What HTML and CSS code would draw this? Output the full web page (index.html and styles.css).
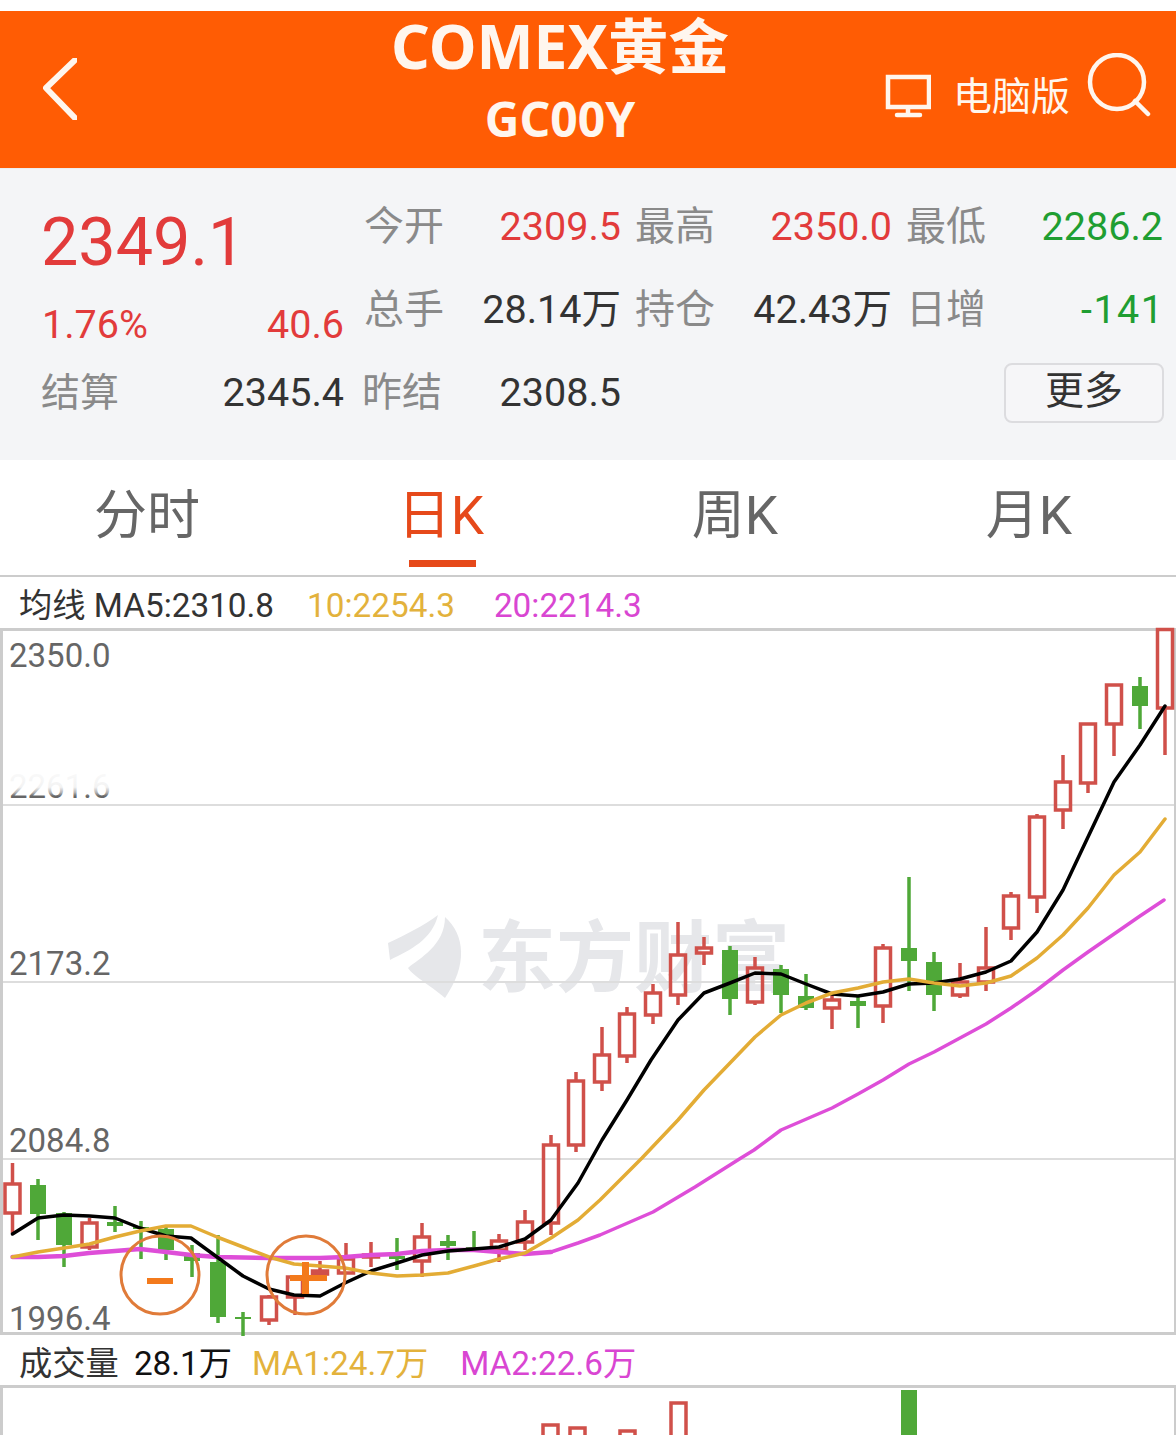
FILE: index.html
```html
<!DOCTYPE html>
<html lang="zh-CN">
<head>
<meta charset="utf-8">
<title>COMEX黄金</title>
<link rel="stylesheet" href="styles.css">
</head>
<body>
<div class="page">
  <header class="topbar">
    <div class="back">
      <svg class="ico-back" width="34" height="62" viewBox="0 0 34 62"><path d="M32 2 3 30 32 60"/></svg>
    </div>
    <div class="titles">
      <div class="title">COMEX黄金</div>
      <div class="code">GC00Y</div>
    </div>
    <div class="actions">
      <svg class="ico-line" width="46" height="44" viewBox="0 0 46 44"><path d="M3 3h41v30H3zM23 33v8M12 41h23"/></svg>
      <span class="pc">电脑版</span>
      <svg class="ico-line" width="64" height="64" viewBox="0 0 64 64"><circle cx="30" cy="29" r="27"/><path d="M48 48 61 61"/></svg>
    </div>
  </header>

  <section class="quote">
    <div class="main">
      <div class="price">2349.1</div>
      <div class="row up"><span>1.76%</span><span>40.6</span></div>
      <div class="row"><span class="lbl">结算</span><span>2345.4</span></div>
    </div>
    <div class="cells">
      <div class="cell"><span class="lbl">今开</span><span class="up">2309.5</span></div>
      <div class="cell"><span class="lbl">最高</span><span class="up">2350.0</span></div>
      <div class="cell"><span class="lbl">最低</span><span class="down">2286.2</span></div>
      <div class="cell"><span class="lbl">总手</span><span>28.14万</span></div>
      <div class="cell"><span class="lbl">持仓</span><span>42.43万</span></div>
      <div class="cell"><span class="lbl">日增</span><span class="down wide">-141</span></div>
      <div class="cell"><span class="lbl">昨结</span><span>2308.5</span></div>
      <div class="cell more-cell"><button class="more">更多</button></div>
    </div>
  </section>

  <nav class="tabs">
    <div class="tab">分时</div>
    <div class="tab active">日K</div>
    <div class="tab">周K</div>
    <div class="tab">月K</div>
  </nav>

  <div class="legend legend-ma">
    <span class="ink">均线 MA5:2310.8</span>
    <span class="gold">10:2254.3</span>
    <span class="pink">20:2214.3</span>
  </div>

  <div class="plot">
    <svg class="kline" width="1176" height="707" viewBox="0 628 1176 707">
      <defs>
        <linearGradient id="fade" x1="0" y1="0" x2="0" y2="1">
          <stop offset="0" stop-color="#fff"/>
          <stop offset="0.7" stop-color="#fff" stop-opacity="0.92"/>
          <stop offset="0.85" stop-color="#fff" stop-opacity="0.5"/>
          <stop offset="0.95" stop-color="#fff" stop-opacity="0"/>
        </linearGradient>
      </defs>
      <path class="wm" d="M445 917C465 935 468 965 445 998 430 985 412 975 408 968 420 958 445 945 445 917ZM438 915C425 925 405 935 388 943L390 960C410 950 432 940 438 915Z"/>
      <text class="wm" x="478" y="986">东方财富</text>
      <path class="grid" d="M3 805H1174M3 982H1174M3 1159H1174"/>
      <text class="axis" x="9" y="667">2350.0</text>
      <text class="axis" x="9" y="798">2261.6</text>
      <rect x="3" y="762" width="110" height="36" fill="url(#fade)"/>
      <text class="axis" x="9" y="975">2173.2</text>
      <text class="axis" x="9" y="1152">2084.8</text>
      <text class="axis" x="9" y="1330">1996.4</text>

      <path class="c-red" d="M12.5 1163V1184M12.5 1213V1233M5 1184h15v29H5zM89.5 1218V1223M89.5 1247V1250M82 1223h15v24H82zM269 1295V1297M269 1320V1325M261.500 1297h15v23h-15zM295 1297V1315M287.500 1277h15v20h-15zM320 1261V1271M312.500 1271h15v3h-15zM346 1243V1259M338.500 1259h15v14h-15zM371 1242V1255M371 1257V1267M363.500 1255h15v2h-15zM422 1223V1237M422 1261V1277M414.500 1237h15v24h-15zM499 1234V1241M499 1250V1262M491.500 1241h15v9h-15zM525 1210V1222M525 1242V1250M517.500 1222h15v20h-15zM551 1135V1145M551 1223V1235M543.500 1145h15v78h-15zM576 1072V1081M576 1145V1152M568.500 1081h15v64h-15zM602 1027V1055M602 1082V1091M594.500 1055h15v27h-15zM627 1007V1014M627 1056V1063M619.500 1014h15v42h-15zM653 984V993M653 1015V1024M645.500 993h15v22h-15zM678 922V955M678 995V1005M670.500 955h15v40h-15zM704 937V948M704 954V965M696.500 948h15v5h-15zM755 957V968M755 1002V1005M747.500 968h15v34h-15zM832 995V1000M832 1008V1029M824.500 1000h15v8h-15zM883 944V948M883 1006V1023M875.500 948h15v58h-15zM960 963V982M960 995V998M952.500 982h15v13h-15zM986 927V968M986 982V991M978.500 968h15v14h-15zM1011 892V896M1011 928V940M1003.500 896h15v32h-15zM1037 814V817M1037 897V913M1029.500 817h15v80h-15zM1063 755V782M1063 810V829M1055.500 782h15v28h-15zM1088 783V793M1080.500 724h15v59h-15zM1114 724V756M1106.500 685h15v39h-15zM1165 708V755M1157.500 629.500h15v78.500h-15z"/>
      <path class="c-wick" d="M38 1179V1240M64 1212V1267M115 1206V1232M141 1221V1259M166 1226V1260M192 1245V1277M218 1235V1323M243 1312V1336M397 1238V1270M448 1235V1260M474 1231V1250M730 946V1015M781 965V1013M806 974V1010M858 997V1028M909 877V991M934 952V1011M1140 677V729"/>
      <path class="c-body" d="M30 1185h16v29H30zM56 1213h16v32H56zM107 1222h16v4h-16zM133 1227h16v2h-16zM158 1229h16v21h-16zM184 1253h16v8h-16zM210 1262h16v55h-16zM235 1317h16v2h-16zM389 1256h16v3h-16zM440 1241h16v5h-16zM466 1247h16v2h-16zM722 950h16v49h-16zM773 969h16v26h-16zM798 996h16v12h-16zM850 1001h16v5h-16zM901 948h16v13h-16zM926 962h16v33h-16zM1132 686h16v20h-16z"/>

      <polyline class="ln ln-pink ln-heavy" points="12.500,1257 38,1257 64,1256 89,1253 115,1251 140,1249 166,1252 191,1255 217,1257 269,1258 320,1258 345,1257 371,1255 397,1254 422,1251 448,1250 474,1250 499,1252 525,1254 551,1252"/>
      <polyline class="ln ln-pink" points="551,1252 578,1243 600,1235 653,1212 695,1187 741,1158 754,1150 781,1130 832,1108 858,1094 883,1080 909,1064 934,1052 960,1038 986,1024 1011,1008 1037,990 1063,970 1088,952 1114,934 1140,916 1164,900"/>
      <polyline class="ln ln-black" points="12.500,1234 38,1218 64,1215 89.500,1216 115,1218 140,1228 166,1236 191,1238 217,1257 243,1276 269,1289 294,1295 320,1296 345,1283 371,1271 397,1263 422,1255 448,1251 474,1249 499,1247 525,1239 551,1220 578,1183 602,1140 627,1100 651,1060 678,1020 704,993 730,983 755,973 781,974 806,984 832,994 858,996 883,992 909,984 934,983 960,979 986,972 1011,961 1037,932 1063,890 1088,837 1114,782 1140,745 1165,706"/>
      <polyline class="ln ln-gold" points="12.500,1257 38,1252 64,1248 89.500,1244 115,1237 140,1231 166,1226 191,1226 217,1237 243,1247 269,1257 294,1264 320,1266 345,1268 371,1273 397,1276 422,1275 448,1273 474,1266 499,1259 525,1253 551,1238 578,1220 600,1200 642,1158 678,1120 704,1090 730,1063 755,1037 781,1015 806,1003 832,993 858,988 883,982 909,979 934,983 960,986 986,983 1011,976 1037,958 1063,935 1088,908 1114,875 1140,852 1165,819"/>

      <circle class="ring" cx="160" cy="1275" r="39"/>
      <circle class="ring" cx="306" cy="1275" r="39"/>
      <path class="sign" d="M147 1278h26v6h-26zM302 1262h7v13h18v6h-18v13h-7v-13h-12v-6h12z"/>
    </svg>
  </div>

  <div class="legend legend-vol">
    <span class="ink">成交量</span>
    <span class="black">28.1万</span>
    <span class="gold">MA1:24.7万</span>
    <span class="pink">MA2:22.6万</span>
  </div>

  <div class="vol">
    <svg class="volsvg" width="1176" height="50" viewBox="0 1385 1176 50">
      <path class="c-red" d="M543 1440v-15h15v15M570 1440v-12h15v12M620 1440v-9h15v9M671 1440v-37h15v37"/>
      <rect class="v-green" x="901" y="1390" width="16" height="45"/>
    </svg>
  </div>
</div>
</body>
</html>
```

FILE: styles.css
```css
* { box-sizing: border-box; }
html, body { margin: 0; padding: 0; background: #fff; }
body { font-family: Roboto, "Noto Sans CJK SC", sans-serif; color: #333; }
.page { width: 1176px; height: 1435px; overflow: hidden; padding-top: 11px; }

.topbar {
  height: 157px;
  background: #ff5c04;
  color: #fff6ee;
  display: grid;
  grid-template-columns: 233px 1fr 289px;
  align-items: center;
}
.back { padding-left: 43px; display: flex; align-items: center; }
.ico-back { fill: none; stroke: #fff6ee; stroke-width: 6; stroke-linecap: round; stroke-linejoin: round; margin-top: -2px; }
.titles { text-align: center; font-family: "Noto Sans", "Noto Sans CJK SC", sans-serif; font-weight: 700; padding-bottom: 8px; }
.title { font-size: 60.500px; line-height: 72px; margin-top: -10px; }
.code { font-size: 48px; line-height: 64px; margin-top: 5px; }
.actions { display: flex; align-items: center; margin-top: -1px; margin-left: -2px; }
.ico-line { fill: none; stroke: #fff6ee; stroke-width: 4.500; stroke-linecap: round; }
.pc { font-size: 39px; line-height: 50px; margin: 16px 17px 0 22px; }
.actions .ico-line:last-child { margin-top: -8px; }
.actions .ico-line:first-child { margin-top: 14px; }

.quote {
  height: 292px;
  background: #f4f5f7;
  border-top: 1px solid #eee;
  display: flex;
  padding: 0 12px 0 42px;
  font-size: 39.500px;
}
.main { width: 302px; flex: none; }
.price { font-size: 66.500px; line-height: 76px; margin: 35px 0 0 -1px; color: #e23b3b; }
.main .row { display: flex; justify-content: space-between; height: 50px; line-height: 50px; margin-top: 20px; }
.main .row + .row { margin-top: 18px; }
.up { color: #e23b3b; }
.down { color: #1f9e32; }
.wide { letter-spacing: 1.500px; margin-right: -1.500px; }
.lbl { color: #8a8a8a; font-size: 40px; }
.main .lbl { font-size: 39px; margin-left: -1px; }
.cells {
  flex: 1;
  margin-left: 20px;
  padding-top: 33px;
  display: grid;
  grid-template-columns: repeat(3, 257px);
  grid-auto-rows: 83px;
  column-gap: 14px;
  align-content: start;
}
.cell { display: flex; justify-content: space-between; height: 50px; line-height: 50px; }
.cell:nth-child(7) { grid-column: 1; margin-left: -2px; }
.more-cell { grid-column: 3; justify-content: flex-end; height: 60px; margin-top: -5px; }
.more {
  width: 160px;
  height: 60px;
  border: 2px solid #dcdcdf;
  border-radius: 8px;
  background: #f6f6f8;
  font: 39px/44px Roboto, "Noto Sans CJK SC", sans-serif;
  color: #333;
  padding: 0 0 4px;
  margin-right: -1px;
}

.tabs { display: flex; height: 117px; background: #fff; border-bottom: 2px solid #ccc; }
.tab { flex: 1; text-align: center; font-size: 53px; line-height: 112px; color: #666; position: relative; }
.tab.active { color: #e6491a; }
.tab.active::after {
  content: "";
  position: absolute;
  left: 50%;
  bottom: 8px;
  width: 67px;
  height: 7px;
  margin-left: -32px;
  background: #e6491a;
}

.legend { display: flex; align-items: baseline; padding-left: 19px; font-size: 33.300px; line-height: 50px; }
.legend-ma { height: 51px; gap: 33px; padding-top: 4px; }
.legend-ma .pink { margin-left: 6px; }
.legend-vol { height: 50px; gap: 15px; padding-top: 4px; }
.legend-vol .gold { margin-left: 5px; }
.legend-vol .pink { margin-left: 17px; }
.ink { color: #333; }
.black { color: #111; }
.gold { color: #e3b23c; }
.pink { color: #d946d2; }

.plot { position: relative; height: 707px; }
.plot::before {
  content: "";
  position: absolute;
  inset: 0;
  border: solid #ccc;
  border-width: 3px 2px 3px 3px;
}
.kline { position: relative; display: block; overflow: visible; }
.volsvg { display: block; }
.wm { fill: #e6e7ea; font: 700 78px "Noto Sans CJK SC", sans-serif; }
.grid { fill: none; stroke: #ddd; stroke-width: 2; }
.axis { fill: #666; font: 33px Roboto, sans-serif; }
.c-red { fill: none; stroke: #d0504a; stroke-width: 3.500; }
.c-wick { fill: none; stroke: #4fa838; stroke-width: 3.500; }
.c-body { fill: #4fa838; }
.ln { fill: none; stroke-width: 3.500; stroke-linejoin: round; stroke-linecap: round; }
.ln-heavy { stroke-width: 4.500; }
.ln-black { stroke: #000; }
.ln-gold { stroke: #e3ac35; }
.ln-pink { stroke: #de4ed8; }
.ring { fill: none; stroke: #e07b39; stroke-width: 3; }
.sign { fill: #f37a1c; }

.vol { position: relative; height: 50px; border: solid #ccc; border-width: 3px 2px 0 3px; }
.volsvg { margin: -3px 0 0 -3px; }
.v-green { fill: #4fa838; }
```
